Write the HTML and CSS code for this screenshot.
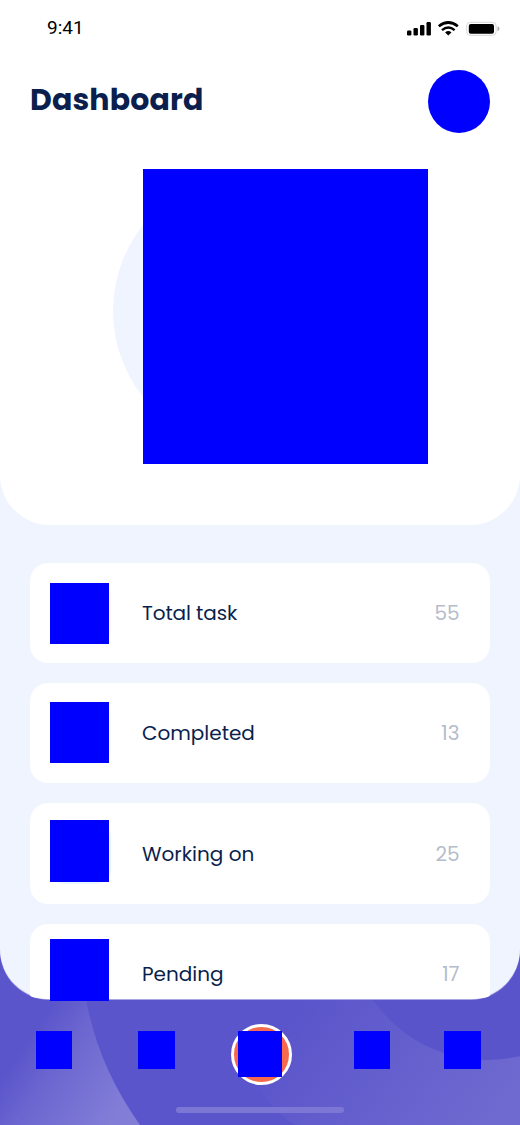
FILE: index.html
```html
<!DOCTYPE html>
<html lang="en">
<head>
<meta charset="utf-8">
<title>Dashboard</title>
<link rel="stylesheet" href="styles.css">
</head>
<body>
<div class="phone">
  <svg class="backdrop" viewBox="0 0 520 175" aria-hidden="true">
    <defs>
      <linearGradient id="left" gradientUnits="userSpaceOnUse" x1="25" y1="95" x2="120" y2="160">
        <stop offset="0" stop-color="#5b55cb"/><stop offset=".35" stop-color="#6c67d0"/><stop offset="1" stop-color="#827ed7"/>
      </linearGradient>
      <linearGradient id="right" gradientUnits="userSpaceOnUse" x1="300" y1="60" x2="480" y2="190">
        <stop offset="0" stop-color="#5b55cb"/><stop offset="1" stop-color="#6f6ad0"/>
      </linearGradient>
    </defs>
    <path fill="url(#left)" d="M0 0H86V49Q98 116 140 175H0z"/>
    <path fill="url(#right)" d="M250 49H520V175H295Q270 160 255 130z"/>
    <circle cx="487" cy="-28" r="138" fill="#5a54ca"/>
  </svg>
  <main class="panel">
    <section class="hero">
      <div class="status">
        <span class="time">9:41</span>
        <svg class="signals" width="94" height="16" viewBox="0 0 94 16" aria-hidden="true">
          <rect x="1" y="9.5" width="4.4" height="5" rx="1.2"/>
          <rect x="7.5" y="7" width="4.4" height="7.5" rx="1.2"/>
          <rect x="14" y="4" width="4.4" height="10.5" rx="1.2"/>
          <rect x="20.5" y="1" width="4.4" height="13.5" rx="1.2"/>
          <path d="M32.8 5.3Q42.3-2.3 51.8 5.3" fill="none" stroke="#000" stroke-width="2.7"/>
          <path d="M36 9.1Q42.3 3.8 48.6 9.1" fill="none" stroke="#000" stroke-width="2.5"/>
          <path d="M39.1 11.4Q42.3 8.8 45.5 11.4L42.3 14.4z"/>
          <rect x="60.7" y="1.3" width="29.4" height="13" rx="3.5" fill="none" stroke="#d8d8d8"/>
          <rect x="62.8" y="3.1" width="25.2" height="9.6" rx="2"/>
          <path fill="#aaa" d="M91.5 5.5Q93.5 6 93.5 7.8T91.5 10z"/>
        </svg>
      </div>
      <header class="header">
        <h1 class="title">Dashboard</h1>
        <div class="avatar"></div>
      </header>
      <div class="feature"><div class="halo"></div><div class="picture"></div></div>
    </section>
    <section class="list">
      <article class="card total"><div class="tile"></div><span class="label">Total task</span><span class="count">55</span></article>
      <article class="card completed"><div class="tile"></div><span class="label">Completed</span><span class="count">13</span></article>
      <article class="card working"><div class="tile"></div><span class="label">Working on</span><span class="count">25</span></article>
      <article class="card pending"><div class="tile"></div><span class="label">Pending</span><span class="count">17</span></article>
    </section>
  </main>
  <nav class="nav">
    <div class="item"></div>
    <div class="item wide"></div>
    <div class="add"><div class="plus"></div></div>
    <div class="item"></div>
    <div class="item wide"></div>
  </nav>
  <div class="home"></div>
</div>
</body>
</html>
```

FILE: styles.css
```css
* { box-sizing: border-box; }
body { margin: 0; }
.phone {
  position: relative; width: 520px; height: 1125px; overflow: hidden;
  background: #5b55cb; color: #0a1f4d;
  font-family: Poppins, Inter, sans-serif;
}
.backdrop { position: absolute; left: 0; bottom: 0; width: 520px; height: 175px; }
.panel {
  position: relative; height: 999px; background: #eff4fe;
  border-radius: 0 0 50px 50px; box-shadow: 0 1px 0 #a9a6e2;
}
.hero { height: 525px; background: #fff; border-radius: 0 0 50px 50px; }
.status { display: flex; justify-content: space-between; height: 70px; padding: 16px 20px 0 47px; }
.time { font: 19px/23px Roboto, sans-serif; color: #000; }
.signals { margin-top: 5px; }
.header { display: flex; justify-content: space-between; height: 99px; padding: 0 30px; }
.title { margin: 11px 0 0; font-size: 30px; line-height: 38px; font-weight: 700; letter-spacing: .15px; }
.avatar { width: 62px; height: 63px; border-radius: 50%; background: #00f; }
.feature { display: flex; padding-left: 113px; }
.halo { width: 276px; height: 276px; margin-top: 4px; border-radius: 50%; background: #eff4fe; }
.picture { position: relative; width: 285px; height: 295px; margin-left: -246px; background: #00f; flex: none; }
.list { display: grid; gap: 20px; padding: 37.5px 30px 0; }
.card {
  position: relative; display: flex; justify-content: space-between; height: 100.4px;
  padding: 0 30.5px 0 20px; border-radius: 18px; background: #fff;
}
.card::before {
  content: ""; position: absolute; left: 20px; top: 20px; width: 61px; height: 61px;
  border-radius: 15px; background: #fef8fa;
}
.card.completed::before { background: #f9fbff; }
.card.working::before { background: #e8f8fc; }
.tile { position: relative; width: 59px; height: 61px; margin-top: 20.5px; background: #00f; }
.completed .tile { margin-top: 19px; }
.working .tile { height: 62px; margin-top: 16.5px; }
.pending .tile { height: 62px; margin-top: 15px; }
.card.pending { height: 75px; border-radius: 18px 18px 20px 20px / 18px 18px 4px 4px; }
.pending::before { display: none; }
.label { flex: 1; margin: 36px 0 0 33px; font-size: 20px; line-height: 28px; }
.total .label { letter-spacing: -.1px; }
.count { margin-top: 36px; font-size: 20px; line-height: 28px; color: #b5bccb; }
.working .label, .working .count { margin-top: 37px; }
.nav { position: relative; display: flex; padding: 25px 0 0 36px; height: 108px; align-items: flex-start; }
.item { flex: none; width: 36px; height: 38px; margin: 7px 66px 0 0; background: #00f; }
.item.wide { width: 37px; margin-right: 56px; }
.add {
  flex: none; display: flex; width: 61px; height: 61px; margin-right: 62px;
  border: 3px solid #fff; border-radius: 50%; background: #f5694f;
}
.add + .item { margin-right: 54px; }
.item.wide:last-child { margin-right: 0; }
.plus { flex: none; width: 44px; height: 46px; margin: 4px 0 0 4px; background: #00f; }
.home { position: relative; width: 168px; height: 6px; margin-left: 176px; border-radius: 3px; background: #7c77d5; }
```
